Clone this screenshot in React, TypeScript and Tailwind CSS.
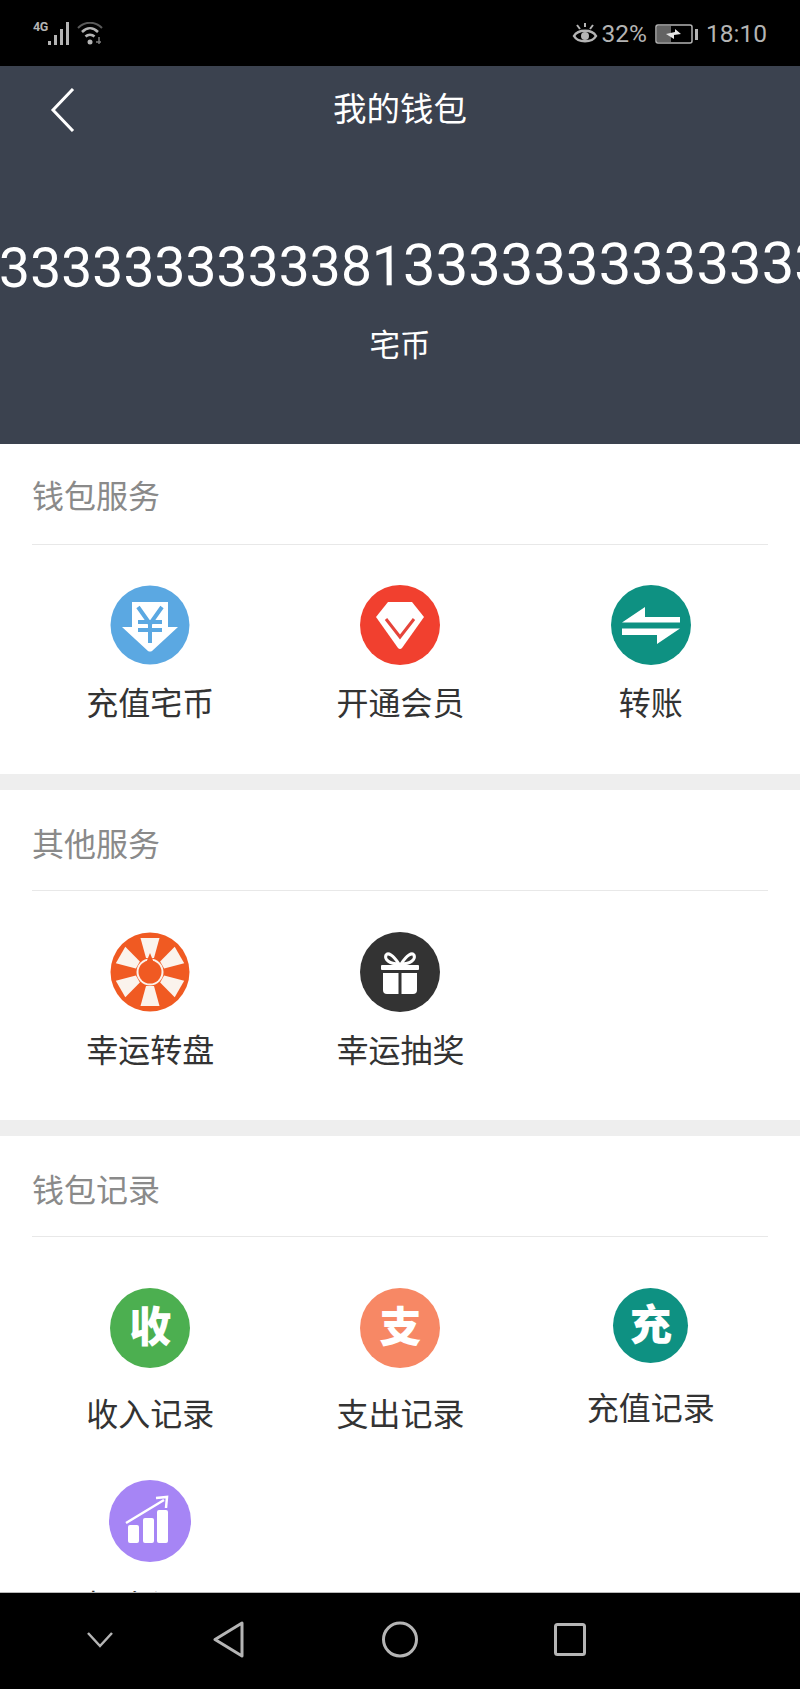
import type { ReactNode } from 'react'

function StatusBar() {
	return (
		<div className="h-[66px] shrink-0 bg-black flex items-center justify-between pl-[33px] pr-[33px] pt-[2px] text-[#b4b4b4]">
			<div className="flex items-start h-[24px]">
				<span className="text-[12.5px] leading-[12px] font-bold w-[14px] -mt-[1px] tracking-[-0.5px]">4G</span>
				<svg width="24" height="24" viewBox="0 0 24 24" fill="currentColor">
					<rect x="1" y="19" width="3" height="4" />
					<rect x="7" y="13" width="3" height="10" />
					<rect x="13" y="7" width="3" height="16" />
					<rect x="19" y="0" width="3" height="23" />
				</svg>
				<svg className="ml-[6px]" width="26" height="24" viewBox="0 0 26 24" fill="none" stroke="currentColor">
					<path d="M1 6 C8 -1 18 -1 25 6" strokeWidth="2" opacity="0.5" />
					<path d="M5 10 C10 5 16 5 21 10" strokeWidth="2.5" />
					<path d="M8.5 14.5 C11 12 15 12 17.5 14.5" strokeWidth="2.5" />
					<circle cx="13" cy="20" r="2.5" fill="currentColor" stroke="none" />
					<path d="M22 15 L22 22 M19 20 L24 20" strokeWidth="1.5" opacity="0.7" />
				</svg>
			</div>
			<div className="flex items-center">
				<svg width="26" height="24" viewBox="0 0 26 24" fill="none" stroke="currentColor" strokeWidth="2.5">
					<path d="M2 14 C6 7 20 7 24 14 C20 21 6 21 2 14 Z" />
					<circle cx="13" cy="14" r="4" fill="currentColor" stroke="none" />
					<path d="M5 3 L8 7 M21 3 L18 7 M13 1 L13 5" strokeWidth="2" />
				</svg>
				<span className="text-[24.5px] leading-[30px] ml-[4px]">32%</span>
				<svg className="ml-[8px]" width="43" height="20" viewBox="0 0 43 20" fill="none">
					<rect x="1" y="1" width="36" height="18" rx="2" stroke="currentColor" strokeWidth="1.5" />
					<rect x="2" y="2" width="14" height="16" fill="currentColor" opacity="0.55" />
					<path d="M11 10 L20 8 L20 5 L26 10 L19 11 L19 15 Z" fill="#e6e6e6" />
					<rect x="40" y="5" width="3" height="11" fill="currentColor" />
				</svg>
				<span className="text-[24.5px] leading-[30px] ml-[8px]">18:10</span>
			</div>
		</div>
	)
}

function WalletHeader() {
	return (
		<div className="h-[378px] shrink-0 bg-[#3b424f] text-white overflow-hidden">
			<div className="h-[88px] grid grid-cols-[1fr_auto_1fr] items-center">
				<svg className="ml-[50px]" width="26" height="44" viewBox="0 0 26 44" fill="none" stroke="currentColor" strokeWidth="3">
					<path d="M23 1 L3 22 L23 43" />
				</svg>
				<div className="text-[33.5px] leading-[44px]">我的钱包</div>
			</div>
			<div className="mt-[78px] -ml-[1px] leading-[66px] whitespace-nowrap -rotate-[0.3deg]">
				<span className="text-[55.3px]">3333333333381</span>
				<span className="text-[58px]">3333333333333</span>
			</div>
			<div className="mt-[11px] text-[30.5px] leading-[44px] text-center">宅币</div>
		</div>
	)
}

function IconBlue() {
	return (
		<svg width="80" height="80" viewBox="0 0 80 80">
			<circle cx="40" cy="40" r="39.5" fill="#5ba8e2" />
			<path d="M22 17 H58 V42 H68 L42 66 Q40 67 38 66 L12 42 H22 Z" fill="#fff" />
			<path d="M28 22 L40 39 L52 22 M28 37 H52 M28 45 H52 M40 38 V58" fill="none" stroke="#5ba8e2" strokeWidth="4" />
		</svg>
	)
}

function IconRed() {
	return (
		<svg width="80" height="80" viewBox="0 0 80 80">
			<circle cx="40" cy="40" r="40" fill="#f1402f" />
			<path d="M28 17 H52 L64 32 L42 63 Q40 65 38 63 L16 32 Z" fill="#fff" />
			<path d="M26 34 L40 52 L54 34" fill="none" stroke="#e5443b" strokeWidth="3" />
		</svg>
	)
}

function IconSwap() {
	return (
		<svg width="80" height="80" viewBox="0 0 80 80">
			<circle cx="40" cy="40" r="40" fill="#0e9182" />
			<path d="M34 22 V32 H69 V37.5 H11 Z" fill="#fff" />
			<path d="M11 43.5 H69 L46 59 V50 H11 Z" fill="#fff" />
		</svg>
	)
}

function IconWheel() {
	return (
		<svg width="80" height="80" viewBox="0 0 80 80">
			<circle cx="40" cy="40" r="39.5" fill="#f05a22" />
			{[0, 60, 120, 180, 240, 300].map((a) => (
				<polygon key={a} points="30.5,6 49.5,6 44,26 36,26" fill="#fbf3ec" transform={`rotate(${a} 40 40)`} />
			))}
			<circle cx="40" cy="40" r="13.5" fill="#fbf3ec" />
			<circle cx="40" cy="40" r="11.5" fill="#f05a22" />
			<path d="M40 21 L44 31 L36 31 Z" fill="#f05a22" />
		</svg>
	)
}

function IconGift() {
	return (
		<svg width="80" height="80" viewBox="0 0 80 80">
			<circle cx="40" cy="40" r="40" fill="#333333" />
			<path d="M39 32 C33 23 28 20 26 23 C24 27 29 32 39 32 Z M41 32 C47 23 52 20 54 23 C56 27 51 32 41 32 Z" fill="none" stroke="#fff" strokeWidth="3" />
			<rect x="21" y="33" width="38" height="5" rx="1" fill="#fff" />
			<path d="M23 41 H38.5 V62 H27 Q23 62 23 58 Z" fill="#fff" />
			<path d="M41.5 41 H57 V58 Q57 62 53 62 H41.5 Z" fill="#fff" />
		</svg>
	)
}

function IconChart() {
	return (
		<svg width="82" height="82" viewBox="0 0 82 82">
			<circle cx="41" cy="41" r="41" fill="#a685f5" />
			<rect x="19" y="45" width="11" height="18" rx="2" fill="#fff" />
			<rect x="34" y="38" width="11" height="25" rx="2" fill="#fff" />
			<rect x="48" y="30" width="11" height="33" rx="2" fill="#fff" />
			<path d="M17 43 L55 20 M47 18 L58 17 L57 28" fill="none" stroke="#fff" strokeWidth="2.5" />
		</svg>
	)
}

function CharIcon({ char, bg, size }: { char: string; bg: string; size: string }) {
	return (
		<div className={`${bg} ${size} rounded-full flex items-center justify-center text-white text-[42px] leading-none font-black`}>
			{char}
		</div>
	)
}

function Cell({ icon, label, gap }: { icon: ReactNode; label: string; gap: string }) {
	return (
		<div className="flex flex-col items-center">
			{icon}
			<div className={`${gap} text-[32px] leading-[44px] text-[#333]`}>{label}</div>
		</div>
	)
}

function Section({ title, head, grid, children }: { title: string; head: string; grid: string; children: ReactNode }) {
	return (
		<section className="bg-white">
			<div className={`${head} mx-8 h-[101px] border-b border-[#e8e8e8] flex items-center text-[32px] text-[#8a8a8a]`}>{title}</div>
			<div className={`${grid} pl-[25px] pr-6 grid grid-cols-3 items-start`}>{children}</div>
		</section>
	)
}

function BottomNav() {
	return (
		<div className="h-[97px] shrink-0 bg-black border-t border-[#b9b9b9] flex items-center pl-[87px] pb-[3px] text-[#b5b5b5]">
			<svg width="26" height="16" viewBox="0 0 26 16" fill="none" stroke="currentColor" strokeWidth="2.5">
				<path d="M1 1 L13 14 L25 1" />
			</svg>
			<svg className="ml-[100px]" width="31" height="37" viewBox="0 0 31 37" fill="none" stroke="currentColor" strokeWidth="3" strokeLinejoin="round">
				<path d="M29 2 V35 L2 18.5 Z" />
			</svg>
			<svg className="ml-[138px]" width="36" height="37" viewBox="0 0 36 37" fill="none" stroke="currentColor" strokeWidth="3">
				<circle cx="18" cy="18.5" r="16.5" />
			</svg>
			<svg className="ml-[136px]" width="32" height="33" viewBox="0 0 32 33" fill="none" stroke="currentColor" strokeWidth="3">
				<rect x="1.5" y="1.5" width="29" height="30" rx="2" />
			</svg>
		</div>
	)
}

export default function App() {
	return (
		<div className="h-[1689px] flex flex-col overflow-hidden font-['Roboto','Noto_Sans_CJK_SC',sans-serif]">
			<StatusBar />
			<WalletHeader />
			<main className="flex-1 min-h-0 overflow-hidden bg-[#eeeeee] flex flex-col gap-4">
				<Section title="钱包服务" head="pt-[6px]" grid="pt-10 pb-12">
					<Cell icon={<IconBlue />} label="充值宅币" gap="mt-[17px]" />
					<Cell icon={<IconRed />} label="开通会员" gap="mt-[17px]" />
					<Cell icon={<IconSwap />} label="转账" gap="mt-[17px]" />
				</Section>
				<Section title="其他服务" head="pt-[10px]" grid="pt-[41px] pb-[47px]">
					<Cell icon={<IconWheel />} label="幸运转盘" gap="mt-[17px]" />
					<Cell icon={<IconGift />} label="幸运抽奖" gap="mt-[17px]" />
				</Section>
				<Section title="钱包记录" head="pt-[10px]" grid="pt-[51px] gap-y-[43px]">
					<Cell icon={<CharIcon char="收" bg="bg-[#4caf50]" size="w-[80px] h-[80px]" />} label="收入记录" gap="mt-[25px]" />
					<Cell icon={<CharIcon char="支" bg="bg-[#f78865]" size="w-[80px] h-[80px]" />} label="支出记录" gap="mt-[25px]" />
					<Cell icon={<CharIcon char="充" bg="bg-[#0e9182]" size="w-[75px] h-[75px]" />} label="充值记录" gap="mt-[24px]" />
					<Cell icon={<IconChart />} label="投资记录" gap="mt-[23px]" />
				</Section>
			</main>
			<BottomNav />
		</div>
	)
}
